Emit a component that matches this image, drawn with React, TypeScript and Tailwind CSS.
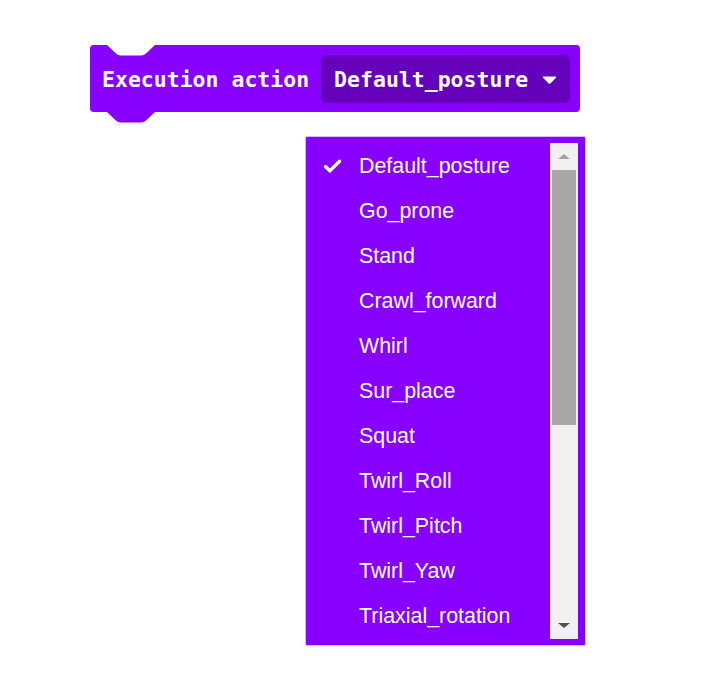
import { Check } from "lucide-react";

const postures = [
  "Default_posture",
  "Go_prone",
  "Stand",
  "Crawl_forward",
  "Whirl",
  "Sur_place",
  "Squat",
  "Twirl_Roll",
  "Twirl_Pitch",
  "Twirl_Yaw",
  "Triaxial_rotation",
];

function Block() {
  return (
    <div className="relative ml-[90px] flex h-[67px] w-[490px] items-center rounded-[4px] bg-[#8800ff] pl-[12px] pr-[10px]">
      {/* top notch */}
      <svg
        className="absolute left-[17px] top-0"
        width="48"
        height="11"
        viewBox="0 0 48 11"
      >
        <path d="M0 0 L9 8.5 Q11 10.5 14 10.5 L34 10.5 Q37 10.5 39 8.5 L48 0 Z" fill="#ffffff" />
      </svg>
      {/* bottom tab */}
      <svg
        className="absolute left-[17px] top-full"
        width="48"
        height="11"
        viewBox="0 0 48 11"
      >
        <path d="M0 0 L9 8.5 Q11 10.5 14 10.5 L34 10.5 Q37 10.5 39 8.5 L48 0 Z" fill="#8800ff" />
      </svg>

      <span className="whitespace-pre pt-[3px] font-['DejaVu_Sans_Mono',monospace] text-[21.5px] font-bold text-white">
        Execution action
      </span>
      <div className="ml-[12px] flex h-[48px] flex-1 items-center justify-between rounded-[6px] bg-[#6500bb] pl-[13px] pr-[13px]">
        <span className="pt-[3px] font-['DejaVu_Sans_Mono',monospace] text-[21.5px] font-bold text-white">
          Default_posture
        </span>
        <svg width="15" height="8" viewBox="0 0 15 8" className="mt-[2px]">
          <path d="M1.5 0.5 L13.5 0.5 Q15 0.5 14 1.8 L8.6 7.2 Q7.5 8.2 6.4 7.2 L1 1.8 Q0 0.5 1.5 0.5 Z" fill="#ffffff" />
        </svg>
      </div>
    </div>
  );
}

function Scrollbar() {
  return (
    <div className="flex w-[28px] flex-col bg-[#f0f0f0]">
      <div className="flex h-[27px] items-center justify-center">
        <svg width="12" height="5" viewBox="0 0 12 5">
          <path d="M0 5 L6 0 L12 5 Z" fill="#a3a3a3" />
        </svg>
      </div>
      <div className="mx-[2px] h-[255px] bg-[#a8a8a8]" />
      <div className="flex-1" />
      <div className="flex h-[27px] items-center justify-center">
        <svg width="12" height="5" viewBox="0 0 12 5">
          <path d="M0 0 L12 0 L6 5 Z" fill="#505050" />
        </svg>
      </div>
    </div>
  );
}

function PostureMenu() {
  return (
    <div className="ml-[305px] mt-[24px] flex h-[510px] w-[281px] rounded-[2px] border border-[#d9b8ff] bg-[#8800ff] pb-[6px] pl-0 pr-[7px] pt-[6px]">
      <div className="flex-1 overflow-hidden">
        {postures.map((name, i) => (
          <div key={name} className="flex h-[45px] items-center">
            <div className="flex w-[53px] justify-end pr-[16px] pt-[1px]">
              {i === 0 && <Check size={21} strokeWidth={4} color="#ffffff" />}
            </div>
            <span className="pt-[2px] font-['Liberation_Sans',Arial,sans-serif] text-[21.4px] text-white">
              {name}
            </span>
          </div>
        ))}
      </div>
      <Scrollbar />
    </div>
  );
}

export default function App() {
  return (
    <div className="h-[682px] w-[720px] bg-white pt-[45px]">
      <Block />
      <PostureMenu />
    </div>
  );
}
